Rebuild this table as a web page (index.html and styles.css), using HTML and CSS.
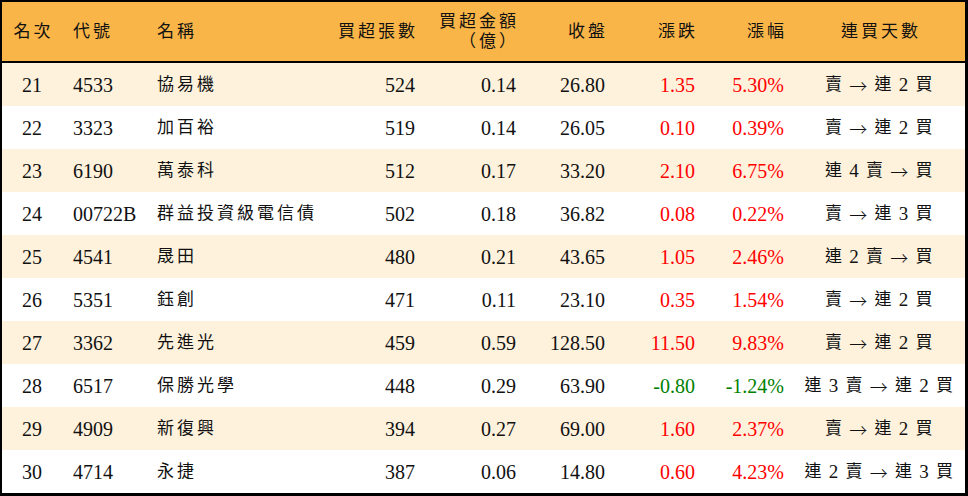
FILE: index.html
```html
<!DOCTYPE html>
<html lang="zh-Hant">
<head>
<meta charset="utf-8">
<title>買超排行</title>
<link rel="stylesheet" href="styles.css">
</head>
<body>
<div class="table">
  <div class="row head">
    <div class="cell center"><span class="zh">名次</span></div>
    <div class="cell left"><span class="zh">代號</span></div>
    <div class="cell left"><span class="zh">名稱</span></div>
    <div class="cell right"><span class="zh">買超張數</span></div>
    <div class="cell right stack"><span class="zh">買超金額</span><span class="zh">（億）</span></div>
    <div class="cell right"><span class="zh">收盤</span></div>
    <div class="cell right"><span class="zh">漲跌</span></div>
    <div class="cell right"><span class="zh">漲幅</span></div>
    <div class="cell center"><span class="zh">連買天數</span></div>
  </div>
  <div class="row alt">
    <div class="cell center num">21</div><div class="cell left num">4533</div><div class="cell left"><span class="zh">協易機</span></div>
    <div class="cell right num">524</div><div class="cell right num">0.14</div><div class="cell right num">26.80</div>
    <div class="cell right num up">1.35</div><div class="cell right num up">5.30%</div>
    <div class="cell center days">賣 <span class="arrow">→</span> 連 <span class="d">2</span> 買</div>
  </div>
  <div class="row">
    <div class="cell center num">22</div><div class="cell left num">3323</div><div class="cell left"><span class="zh">加百裕</span></div>
    <div class="cell right num">519</div><div class="cell right num">0.14</div><div class="cell right num">26.05</div>
    <div class="cell right num up">0.10</div><div class="cell right num up">0.39%</div>
    <div class="cell center days">賣 <span class="arrow">→</span> 連 <span class="d">2</span> 買</div>
  </div>
  <div class="row alt">
    <div class="cell center num">23</div><div class="cell left num">6190</div><div class="cell left"><span class="zh">萬泰科</span></div>
    <div class="cell right num">512</div><div class="cell right num">0.17</div><div class="cell right num">33.20</div>
    <div class="cell right num up">2.10</div><div class="cell right num up">6.75%</div>
    <div class="cell center days">連 <span class="d">4</span> 賣 <span class="arrow">→</span> 買</div>
  </div>
  <div class="row">
    <div class="cell center num">24</div><div class="cell left num">00722B</div><div class="cell left"><span class="zh">群益投資級電信債</span></div>
    <div class="cell right num">502</div><div class="cell right num">0.18</div><div class="cell right num">36.82</div>
    <div class="cell right num up">0.08</div><div class="cell right num up">0.22%</div>
    <div class="cell center days">賣 <span class="arrow">→</span> 連 <span class="d">3</span> 買</div>
  </div>
  <div class="row alt">
    <div class="cell center num">25</div><div class="cell left num">4541</div><div class="cell left"><span class="zh">晟田</span></div>
    <div class="cell right num">480</div><div class="cell right num">0.21</div><div class="cell right num">43.65</div>
    <div class="cell right num up">1.05</div><div class="cell right num up">2.46%</div>
    <div class="cell center days">連 <span class="d">2</span> 賣 <span class="arrow">→</span> 買</div>
  </div>
  <div class="row">
    <div class="cell center num">26</div><div class="cell left num">5351</div><div class="cell left"><span class="zh">鈺創</span></div>
    <div class="cell right num">471</div><div class="cell right num">0.11</div><div class="cell right num">23.10</div>
    <div class="cell right num up">0.35</div><div class="cell right num up">1.54%</div>
    <div class="cell center days">賣 <span class="arrow">→</span> 連 <span class="d">2</span> 買</div>
  </div>
  <div class="row alt">
    <div class="cell center num">27</div><div class="cell left num">3362</div><div class="cell left"><span class="zh">先進光</span></div>
    <div class="cell right num">459</div><div class="cell right num">0.59</div><div class="cell right num">128.50</div>
    <div class="cell right num up">11.50</div><div class="cell right num up">9.83%</div>
    <div class="cell center days">賣 <span class="arrow">→</span> 連 <span class="d">2</span> 買</div>
  </div>
  <div class="row">
    <div class="cell center num">28</div><div class="cell left num">6517</div><div class="cell left"><span class="zh">保勝光學</span></div>
    <div class="cell right num">448</div><div class="cell right num">0.29</div><div class="cell right num">63.90</div>
    <div class="cell right num down">-0.80</div><div class="cell right num down">-1.24%</div>
    <div class="cell center days">連 <span class="d">3</span> 賣 <span class="arrow">→</span> 連 <span class="d">2</span> 買</div>
  </div>
  <div class="row alt">
    <div class="cell center num">29</div><div class="cell left num">4909</div><div class="cell left"><span class="zh">新復興</span></div>
    <div class="cell right num">394</div><div class="cell right num">0.27</div><div class="cell right num">69.00</div>
    <div class="cell right num up">1.60</div><div class="cell right num up">2.37%</div>
    <div class="cell center days">賣 <span class="arrow">→</span> 連 <span class="d">2</span> 買</div>
  </div>
  <div class="row">
    <div class="cell center num">30</div><div class="cell left num">4714</div><div class="cell left"><span class="zh">永捷</span></div>
    <div class="cell right num">387</div><div class="cell right num">0.06</div><div class="cell right num">14.80</div>
    <div class="cell right num up">0.60</div><div class="cell right num up">4.23%</div>
    <div class="cell center days">連 <span class="d">2</span> 賣 <span class="arrow">→</span> 連 <span class="d">3</span> 買</div>
  </div>
</div>
</body>
</html>
```
FILE: styles.css
```css
html, body {
  margin: 0;
  padding: 0;
  background: #ffffff;
}

body {
  font-family: "Liberation Serif", "Noto Sans CJK TC", serif;
  color: #111111;
}

.table {
  box-sizing: border-box;
  width: 968px;
  height: 496px;
  border-style: solid;
  border-color: #000000;
  border-width: 2px 3px 3px 2px;
  display: flex;
  flex-direction: column;
}

.row {
  display: grid;
  grid-template-columns: 60px 84px 184px 95px 101px 89px 90px 89px 1fr;
  height: 43px;
  background: #ffffff;
}

.row.alt {
  background: #fef2dd;
}

.row.head {
  height: 59px;
  background: #f9b548;
  border-bottom: 2px solid #000000;
}

.cell {
  display: flex;
  align-items: center;
  font-size: 20px;
  line-height: 20px;
  white-space: nowrap;
}

.cell.left {
  justify-content: flex-start;
  padding-left: 11px;
}

.cell.right {
  justify-content: flex-end;
  padding-right: 10px;
}

.cell.center {
  justify-content: center;
}

.cell.stack {
  flex-direction: column;
  align-items: flex-end;
  justify-content: center;
}

.zh {
  font-family: "Liberation Serif", "Noto Sans CJK TC", serif;
  font-size: 17px;
  line-height: 20px;
  letter-spacing: 3px;
  margin-right: -3px;
}

.num {
  font-family: "Liberation Serif", serif;
}

.up {
  color: #ff0000;
}

.down {
  color: #008000;
}

.days {
  font-family: "Liberation Serif", "Noto Sans CJK TC", serif;
  font-size: 17px;
  letter-spacing: 1.5px;
  white-space: pre;
}

.days .d {
  font-family: "Liberation Serif", serif;
  font-size: 19px;
}

.days .arrow {
  font-family: "Noto Sans CJK TC", sans-serif;
  font-size: 18px;
  font-weight: 300;
}
```
